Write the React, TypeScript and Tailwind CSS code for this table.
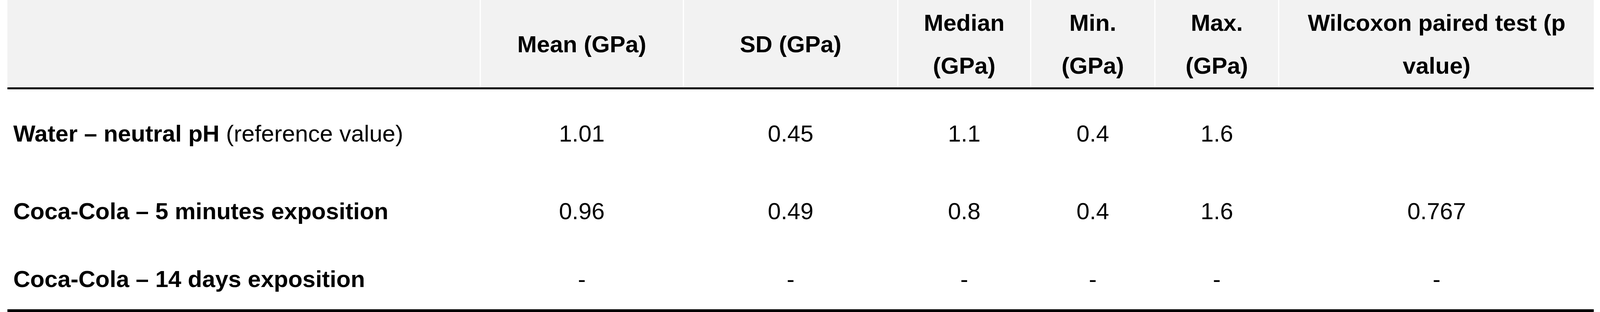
import React from "react";

type Row = {
    label: string;
    note?: string;
    values: string[];
};

const headers = [
    ["Mean (GPa)"],
    ["SD (GPa)"],
    ["Median", "(GPa)"],
    ["Min.", "(GPa)"],
    ["Max.", "(GPa)"],
    ["Wilcoxon paired test (p", "value)"],
];

const rows: Row[] = [
    { label: "Water – neutral pH", note: " (reference value)", values: ["1.01", "0.45", "1.1", "0.4", "1.6", ""] },
    { label: "Coca-Cola – 5 minutes exposition", values: ["0.96", "0.49", "0.8", "0.4", "1.6", "0.767"] },
    { label: "Coca-Cola – 14 days exposition", values: ["-", "-", "-", "-", "-", "-"] },
];

// column proportions taken from the source table
const grid = "grid grid-cols-[1395fr_601fr_633fr_393fr_367fr_366fr_933fr]";

export default function App() {
    return (
        <div className="w-full h-[800px] bg-white overflow-hidden pl-[0.465%] pr-[0.38%] font-['Liberation_Sans',Arial,sans-serif] text-[60px] text-black">
            {/* Header */}
            <div className="border-b-[6px] border-black">
                <div className={`${grid} h-[223px]`}>
                    <div className="bg-[#f2f2f2]" />
                    {headers.map((lines, i) => (
                        <div
                            key={i}
                            className="bg-[#f2f2f2] border-l-[3px] border-white flex flex-col items-center justify-center pt-[4px] font-bold leading-[110px] text-center whitespace-nowrap"
                        >
                            {lines.map((l, j) => (
                                <span key={j}>{l}</span>
                            ))}
                        </div>
                    ))}
                </div>
            </div>

            {/* Body */}
            <div className="border-b-[7px] border-black pt-[74px] pb-[37px]">
                {rows.map((row, i) => (
                    <div
                        key={i}
                        className={`${grid} leading-[80px] ${i === 1 ? "mt-[119px]" : ""} ${i === 2 ? "mt-[94px]" : ""}`}
                    >
                        <div className="pl-[15px] whitespace-nowrap">
                            <span className="font-bold">{row.label}</span>
                            {row.note && <span>{row.note}</span>}
                        </div>
                        {row.values.map((v, j) => (
                            <div key={j} className="text-center pl-[3px]">
                                {v}
                            </div>
                        ))}
                    </div>
                ))}
            </div>
        </div>
    );
}
